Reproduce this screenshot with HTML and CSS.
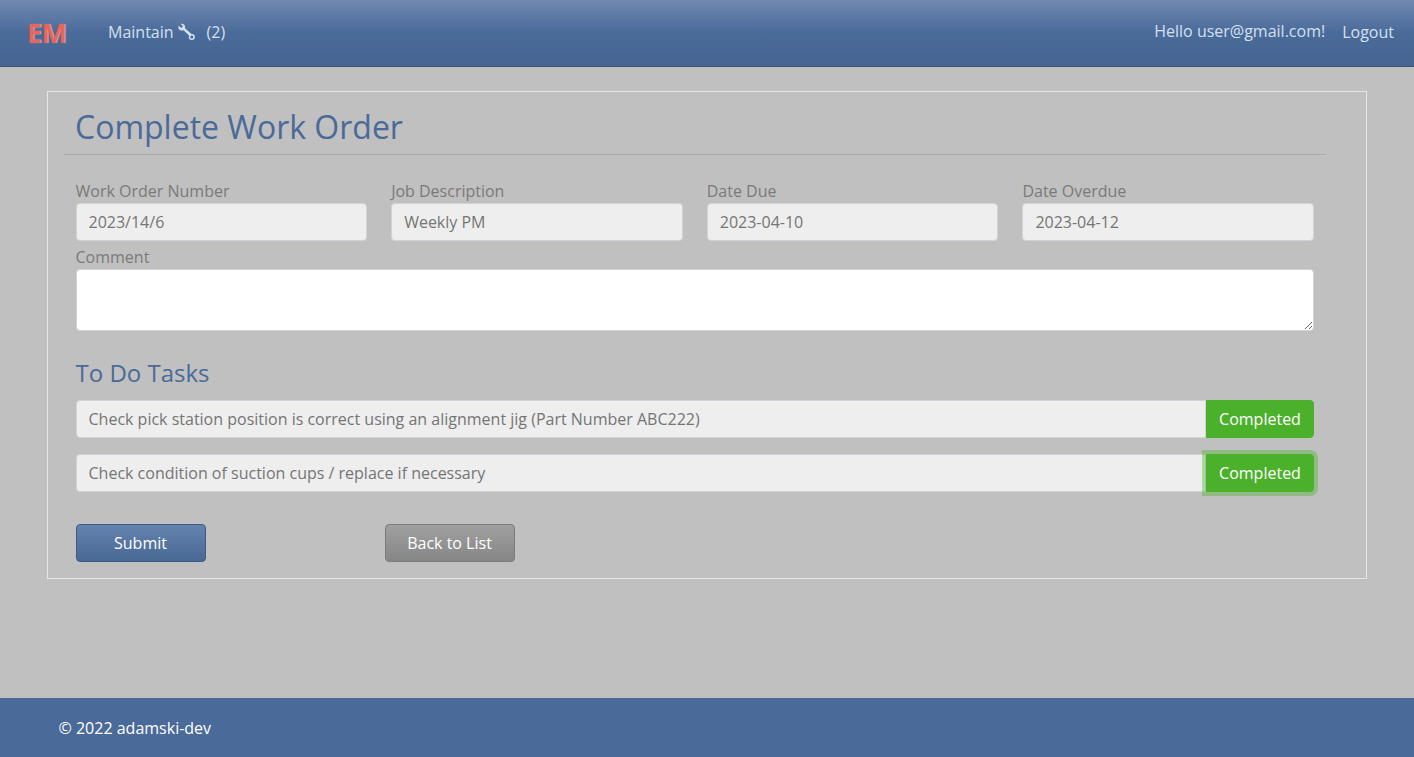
FILE: index.html
```html
<!DOCTYPE html>
<html lang="en">
<head>
<meta charset="utf-8">
<title>Complete Work Order</title>
<link rel="stylesheet" href="styles.css">
</head>
<body>
<header class="navbar">
  <div class="nav-left">
    <a class="brand">EM</a>
    <a class="nav-link maintain">Maintain
      <svg class="wrench" viewBox="0 0 18 18" width="18" height="18" aria-hidden="true">
        <path d="M3.6 0.8 L6 3.2 L4.2 5 L1.6 2.8 C0.8 5 2 7.8 5 7.6 L6.6 7.2 L12.5 13 L14.5 11 L8 5.2 C8.8 2.5 6.5 0.2 3.6 0.8 Z" fill="currentColor"/>
        <circle cx="14.8" cy="14" r="2.3" fill="none" stroke="currentColor" stroke-width="1.5"/>
      </svg>
      <span class="count">(2)</span></a>
  </div>
  <div class="nav-right">
    <span class="hello">Hello user@gmail.com!</span>
    <a class="logout">Logout</a>
  </div>
</header>
<main class="content">
  <section class="card">
    <h1 class="title">Complete Work Order</h1>
    <hr class="rule">
    <form class="form">
      <div class="grid">
        <div class="field"><label>Work Order Number</label><input class="control readonly" value="2023/14/6" readonly></div>
        <div class="field"><label>Job Description</label><input class="control readonly" value="Weekly PM" readonly></div>
        <div class="field"><label>Date Due</label><input class="control readonly" value="2023-04-10" readonly></div>
        <div class="field"><label>Date Overdue</label><input class="control readonly" value="2023-04-12" readonly></div>
      </div>
      <div class="field comment"><label>Comment</label><textarea class="control area"></textarea></div>
      <h2 class="subtitle">To Do Tasks</h2>
      <div class="task">
        <input class="control readonly task-input" value="Check pick station position is correct using an alignment jig (Part Number ABC222)" readonly>
        <button type="button" class="done">Completed</button>
      </div>
      <div class="task">
        <input class="control readonly task-input" value="Check condition of suction cups / replace if necessary" readonly>
        <button type="button" class="done focused">Completed</button>
      </div>
      <div class="actions">
        <button type="button" class="btn submit">Submit</button>
        <button type="button" class="btn back">Back to List</button>
      </div>
    </form>
  </section>
</main>
<footer class="footer">© 2022 adamski-dev</footer>
</body>
</html>
```
FILE: styles.css
```css
* { box-sizing: border-box; }
html, body { height: 100%; }
body {
  margin: 0;
  height: 757px;
  display: flex;
  flex-direction: column;
  background: #c0c0c0;
  font-family: "Open Sans", sans-serif;
  font-size: 16px;
  line-height: 24px;
  overflow: hidden;
}
.navbar {
  height: 67px;
  flex: none;
  display: flex;
  justify-content: space-between;
  align-items: center;
  padding: 0 20px 3px 27px;
  background: linear-gradient(to bottom, #7089b0 0%, #4a6a99 50%, #466590 100%);
  border-bottom: 1px solid #3d5375;
  color: #d3e0f0;
}
.nav-left { display: flex; align-items: center; }
.brand {
  width: 81px;
  font-size: 27px;
  font-weight: 700;
  color: #e8645c;
  text-shadow: 1px 0 1px #e9a9a4;
  line-height: 32px;
  letter-spacing: -0.5px;
  position: relative;
  top: 1px;
}
.maintain { display: flex; align-items: center; }
.wrench { margin-left: 3px; color: #d3e0f0; }
.count { margin-left: 12px; }
.nav-right { display: flex; align-items: center; }
.hello { position: relative; top: -1px; }
.logout { margin-left: 17px; }
.content { flex: 1; padding: 24px 47px 0; }
.card {
  height: 488px;
  border: 1px solid #e6e6e6;
  padding: 0 40px 0 17px;
}
.title {
  margin: 0;
  padding: 11px 0 0 11px;
  font-size: 32px;
  line-height: 48px;
  font-weight: 400;
  color: #4a6a99;
  transform: translateX(-1px);
}
.rule {
  margin: 3px 0 0 -1px;
  border: 0;
  border-top: 1px solid #aaaaaa;
}
.form { padding: 24px 12px 0 10.5px; }
.grid {
  display: grid;
  grid-template-columns: repeat(4, 1fr);
  column-gap: 24px;
}
.field { display: flex; flex-direction: column; }
.field label { color: #7a7a7a; height: 24px; }
.control {
  display: block;
  width: 100%;
  font: inherit;
  color: #757575;
  padding: 6px 12px;
  border: 1px solid #ced4da;
  border-radius: 4px;
  background: #fff;
  outline: none;
}
.readonly { background: #eeeeee; height: 38px; }
.comment { margin-top: 4px; }
.area { height: 62px; }
.subtitle {
  margin: 24px 0 0;
  font-size: 24px;
  line-height: 36px;
  font-weight: 400;
  color: #4a6a99;
}
.task { display: flex; margin-top: 9px; height: 38px; }
.task + .task { margin-top: 16px; }
.task-input { flex: 1; border-radius: 4px 0 0 4px; }
.done {
  width: 108px;
  flex: none;
  font: inherit;
  color: #fff;
  background: #4bb12b;
  border: 1px solid #4bb12b;
  border-radius: 0 4px 4px 0;
  padding: 0;
}
.focused { box-shadow: 0 0 0 4px rgba(75, 177, 43, 0.4); position: relative; }
.actions { display: flex; gap: 179px; margin-top: 32px; }
.btn {
  width: 130px;
  height: 38px;
  font: inherit;
  color: #fff;
  border-radius: 4px;
  padding: 0;
}
.submit {
  background: linear-gradient(to bottom, #6483ad, #486895);
  border: 1px solid #3d5a85;
}
.back {
  background: linear-gradient(to bottom, #a0a0a0, #868686);
  border: 1px solid #7c7c7c;
}
.footer {
  height: 59px;
  flex: none;
  display: flex;
  align-items: center;
  padding-left: 58.5px;
  background: #4a6a99;
  color: #fff;
}
```
